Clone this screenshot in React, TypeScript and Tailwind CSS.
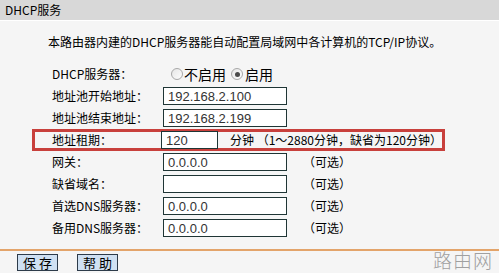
import React from "react";

const cjk = { fontFamily: '"Noto Sans CJK SC", "Noto Sans", sans-serif' };
const latin = { fontFamily: '"Liberation Sans", Arial, sans-serif' };

const Radio = ({ checked }: { checked?: boolean }) => (
  <span className="inline-flex items-center justify-center w-[12px] h-[12px] rounded-full border border-[#a8a8a8] bg-gradient-to-br from-[#e6e6e6] to-[#fdfdfd]">
    {checked && <span className="w-[5px] h-[5px] rounded-full bg-[#4a4a4a]" />}
  </span>
);

const Field = ({ value, w = "w-[124px]" }: { value: string; w?: string }) => (
  <div
    className={`${w} h-[18px] border border-[#1f3535] bg-white pl-[4px] flex items-center text-[13px] text-[#333] leading-none`}
    style={latin}
  >
    {value}
  </div>
);

const Row = ({ label, children }: { label: string; children: React.ReactNode }) => (
  <div className="h-[22px] flex items-center pl-[52px]">
    <div className="w-[111px] text-[12px] text-black">{label}</div>
    {children}
  </div>
);

const Optional = () => <span className="ml-[16px] text-[12px] text-black">（可选）</span>;

export default function App() {
  return (
    <div className="relative w-[499px] h-[273px] overflow-hidden bg-[#f5f5f5]" style={cjk}>
      <div className="h-[21px] bg-[#d8d8d8] border-b border-white px-[5px] flex items-center text-[12px] text-black">
        DHCP服务
      </div>
      <div className="h-[42px] flex items-center pl-[48px] text-[12px] text-black">
        本路由器内建的DHCP服务器能自动配置局域网中各计算机的TCP/IP协议。
      </div>

      <Row label="DHCP服务器：">
        <div className="flex items-center text-[14px] text-black leading-none">
          <span className="ml-[8px] flex"><Radio /></span>
          <span className="ml-[1px]">不启用</span>
          <span className="ml-[5px] flex"><Radio checked /></span>
          <span className="ml-[2px]">启用</span>
        </div>
      </Row>
      <Row label="地址池开始地址：">
        <Field value="192.168.2.100" />
      </Row>
      <Row label="地址池结束地址：">
        <Field value="192.168.2.199" />
      </Row>

      <div className="ml-[32px] w-[413px] h-[22px] border-[3px] border-[#c8403c] flex items-center pl-[17px]">
        <div className="w-[111px] text-[12px] text-black">地址租期：</div>
        <Field value="120" w="w-[58px]" />
        <span className="ml-[12px] text-[12px] text-black whitespace-nowrap">分钟 （1～2880分钟，缺省为120分钟）</span>
      </div>

      <Row label="网关：">
        <Field value="0.0.0.0" />
        <Optional />
      </Row>
      <Row label="缺省域名：">
        <Field value="" />
        <Optional />
      </Row>
      <Row label="首选DNS服务器：">
        <Field value="0.0.0.0" />
        <Optional />
      </Row>
      <Row label="备用DNS服务器：">
        <Field value="0.0.0.0" />
        <Optional />
      </Row>

      <div className="mt-[10px] border-t-[2px] border-[#e3a46a]" />
      <div className="flex gap-[19px] pl-[17px] pt-[3px]">
        <button className="w-[41px] h-[17px] border border-[#2d3b4a] bg-[#cfe0f2] text-[13px] leading-none text-black tracking-[3px] pl-[3px]">
          保存
        </button>
        <button className="w-[41px] h-[17px] border border-[#2d3b4a] bg-[#cfe0f2] text-[13px] leading-none text-black tracking-[3px] pl-[3px]">
          帮助
        </button>
      </div>

      <div className="absolute right-[6px] bottom-[4px] text-[19px] text-[#a0a0a0] font-light tracking-[1px] leading-none">
        路由网
      </div>
    </div>
  );
}
